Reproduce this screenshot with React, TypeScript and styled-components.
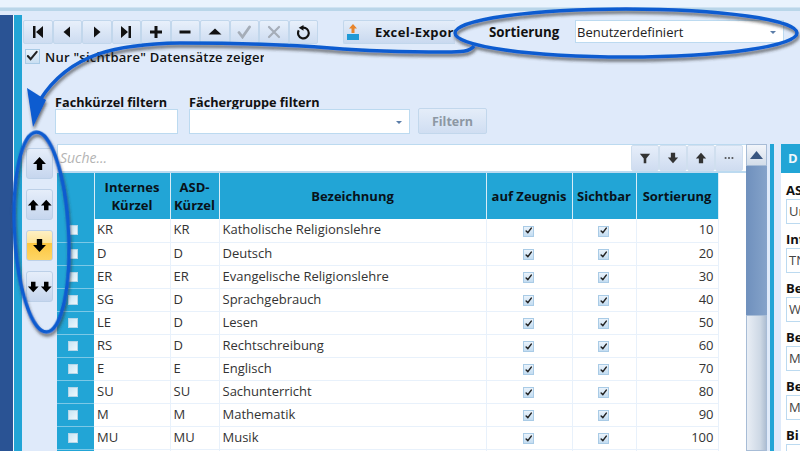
import React from "react";
import styled, { createGlobalStyle } from "styled-components";

const Global = createGlobalStyle`
  html, body { margin: 0; padding: 0; background: #dfeafa; }
  * { box-sizing: border-box; }
`;

const Page = styled.div`
  position: relative; width: 800px; height: 451px; overflow: hidden;
  background: #dfeafa; font-family: "Open Sans", "Noto Sans", sans-serif; color: #111;
  font-size: 13px;
`;
const TopBar = styled.div`
  height: 11px; background: #e9f3fd; border-bottom: 3px solid #b9d6e9;
  box-shadow: inset 0 -1px 0 #cfe3f2;
`;
const Main = styled.div`display: flex; margin-top: 4px; height: 436px;`;
const Sidebar = styled.div`width: 13px; background: #2a5394; border-right: 0;`;
const SideGap = styled.div`width: 1px; background: #f4f8fd;`;
const CyanStrip = styled.div`width: 8px; background: #22a5d6;`;
const Content = styled.div`flex: 1; min-width: 0; display: flex; flex-direction: column; padding-top: 5px;`;

const ToolRow = styled.div`display: flex; align-items: flex-start; padding-left: 1px; height: 24px;`;
const NavBar = styled.div`display: flex; width: 295px;`;
const NavBtn = styled.div`
  width: 29.5px; height: 24px; display: flex; align-items: center; justify-content: center;
  border: 1px solid #c2d7ec; border-radius: 2px;
  background: linear-gradient(#e8f0fb, #cddcf1);
  color: ${p => (p.$off ? "#a5adb8" : "#111")};
`;
const ExcelBtn = styled.div`
  width: 112px; height: 24px; margin-left: 25px; display: flex; align-items: center;
  border: 1px solid #c2d7ec; border-right: 0; border-radius: 2px 0 0 2px; padding-left: 2px;
  background: linear-gradient(#e4edf9, #c9d9ef); overflow: hidden; white-space: nowrap;
  font-weight: 700; font-size: 13px; letter-spacing: 0.4px;
`;
const ExcelIcon = styled.svg`flex: none;`;
const ExcelText = styled.span`flex: none; margin-left: 15px;`;
const SortLabel = styled.div`margin-left: 34px; font-weight: 700; font-size: 13.3px; line-height: 25px; width: 86px;`;
const Combo = styled.div`
  width: ${p => p.$w}px; height: ${p => p.$h}px; background: #fff; border: 1px solid #bcdaf0;
  display: flex; align-items: center; justify-content: space-between; padding: 0 7px 0 1px;
  font-size: 13px; color: #222;
`;
const Caret = styled.span`
  width: 0; height: 0; border-left: 3px solid transparent; border-right: 3px solid transparent;
  border-top: 3px solid #5b7da8; margin-top: 1px;
`;
const CheckRow = styled.div`display: flex; align-items: center; height: 16px; margin: 4px 0 0 3px;`;
const BigCheck = styled.div`
  width: 15px; height: 15px; border: 1px solid #a9cbe6; background: linear-gradient(#eaf3fb,#c9dff2);
  display: flex; align-items: center; justify-content: center; color: #222;
`;
const CheckText = styled.div`
  margin-left: 5px; width: 219px; overflow: hidden; white-space: nowrap; padding-top: 1px;
  font-weight: 600; font-size: 13px; letter-spacing: 0.25px;
`;
const FilterRow = styled.div`display: flex; align-items: flex-end; height: 70px; padding: 0 0 0 33px;`;
const Field = styled.div`display: flex; flex-direction: column; margin-right: ${p => p.$mr}px;`;
const FieldLabel = styled.label`font-weight: 700; font-size: 12.7px; line-height: 15px; margin-bottom: -1px; white-space: nowrap;`;
const TextBox = styled.div`width: 123px; height: 25px; background: #fff; border: 1px solid #bcdaf0;`;
const FilterBtn = styled.div`
  width: 69px; height: 26px; display: flex; align-items: center; justify-content: center;
  border: 1px solid #c2d7ec; border-radius: 2px; background: linear-gradient(#e4edf9,#d0def2);
  font-weight: 700; font-size: 12.5px; color: #8c97a3;
`;
const Body = styled.div`display: flex; margin-top: 10px; flex: 1; min-height: 0;`;
const ArrowCol = styled.div`width: 35px; padding: 4px 0 0 4px; display: flex; flex-direction: column; gap: 10px;`;
const ArrowBtn = styled.div`
  width: 27px; height: 31px; display: flex; align-items: center; justify-content: center;
  border: 1px solid #bcd0e8; border-radius: 3px; color: #000;
  background: ${p => p.$on ? "linear-gradient(#fdf0c4 0%, #fde49a 40%, #fdc63f 42%, #fed565 100%)" : "linear-gradient(#e6eefa,#c6d6ee)"};
`;
const GridPanel = styled.div`width: 689px; display: flex; flex-direction: column; background: #fff; overflow: hidden;`;
const SearchRow = styled.div`
  height: 29px; flex: none; display: flex; justify-content: space-between; background: #fff;
  border: 1px solid #bcdaf0; border-bottom: 2px solid #bcdaf0; border-right: 0; padding-right: 3px;
`;
const SearchText = styled.div`font-style: italic; color: #b3b3b3; font-size: 14px; padding: 3px 0 0 2px;`;
const SearchBtns = styled.div`display: flex;`;
const SearchBtn = styled.div`
  width: 28px; height: 26px; display: flex; align-items: center; justify-content: center;
  border: 1px solid #d0dfef; border-radius: 2px; background: linear-gradient(#e6eefa,#cfdcf0); color: #333;
`;
const Table = styled.table`
  width: 661px; border-collapse: collapse; table-layout: fixed; font-size: 13px; color: #333;
`;
const HeadCell = styled.th`
  height: 46px; padding: 0; background: #22a5d6; color: #08121a; font-size: 13px; font-weight: 700;
  line-height: 18px; text-align: center; border-right: 1px solid #d8ecf7;
`;
const SelCell = styled.td`
  height: 23px; padding: 0; background: #22a5d6; border-bottom: 1px solid #7cc8e6; text-align: center; line-height: 0;
`;
const Cell = styled.td`
  height: 23px; padding: 0 4px 2px 3px; background: #fff; white-space: nowrap; overflow: hidden; line-height: 18px;
  border-right: 1px solid #e8f1fb; border-bottom: 1px solid #e8f1fb;
  text-align: ${p => p.$a || "left"};
`;
const RowBox = styled.span`
  display: inline-block; width: 10px; height: 10px; margin-right: 6px;
  background: linear-gradient(135deg, #c8e6f5, #eef7fc); border: 1px solid #b5d6e8;
`;
const TinyCheck = styled.span`
  display: inline-flex; width: 11px; height: 11px; align-items: center; justify-content: center;
  background: linear-gradient(#eaf3fb,#c3dcf1); border: 1px solid #a9cbe6; vertical-align: -1px; color: #222;
`;
const ScrollBar = styled.div`width: 21px; display: flex; flex-direction: column; background: #7d9cc6;`;
const ScrollUp = styled.div`
  height: 22px; border: 1px solid #a7bcd6; background: linear-gradient(#f2f5fa,#d3dde9);
  display: flex; align-items: center; justify-content: center;
`;
const ScrollTrack = styled.div`height: 149px; background: linear-gradient(90deg,#6f90bd,#85a3ca);`;
const ScrollThumb = styled.div`flex: 1; border: 1px solid #a7bcd6; background: linear-gradient(90deg,#e9eef5,#cdd8e5 70%,#aebed2);`;
const RightStripWrap = styled.div`width: 14px; padding: 0 7px 0 3px; display: flex;`;
const RightStrip = styled.div`width: 4px; background: #22a5d6;`;
const Detail = styled.div`flex: 1; min-width: 0; background: #fff; overflow: hidden; display: flex; flex-direction: column;`;
const DetailHead = styled.div`
  height: 29px; flex: none; background: #22a5d6; color: #eef8fd; font-weight: 700; font-size: 13px; padding: 5px 0 0 7px;
`;
const DetailBody = styled.div`padding: 9px 0 0 5px; background: #fff;`;
const DetailLabel = styled.div`font-weight: 700; font-size: 13px; line-height: 17px; white-space: nowrap;`;
const DetailInput = styled.div`
  height: 25px; width: 40px; margin-bottom: 7px; border: 1px solid #bcdaf0; padding: 2px 0 0 2px;
  font-size: 13px; color: #444; overflow: hidden; background: #fff;
`;
const Overlay = styled.svg`position: absolute; left: 0; top: 0; pointer-events: none;`;

const Ico = ({ d, w = 14, h = 14, sw = 0 }: { d: string; w?: number; h?: number; sw?: number }) => (
  <svg width={w} height={h} viewBox="0 0 14 14">
    <path d={d} fill={sw ? "none" : "currentColor"} stroke={sw ? "currentColor" : "none"} strokeWidth={sw} strokeLinecap="round" />
  </svg>
);

const UP = "M7 1 L13 7.5 H9.5 V13 H4.5 V7.5 H1 Z";
const DOWN = "M7 13 L13 6.5 H9.5 V1 H4.5 V6.5 H1 Z";
const CHECK = "M2 7 L5 10 L11 2";

const navIcons = [
  <Ico key="a" d="M2 1h2.5v12H2z M12 1v12L5 7z" />,
  <Ico key="b" d="M10 1.5v11L3.5 7z" />,
  <Ico key="c" d="M4 1.5v11L10.5 7z" />,
  <Ico key="d" d="M2 1v12L9 7z M9.5 1H12v12H9.5z" />,
  <Ico key="e" d="M5.5 1h3v4.5H13v3H8.5V13h-3V8.5H1v-3h4.5z" />,
  <Ico key="f" d="M1.5 5.5h11v3h-11z" />,
  <Ico key="g" d="M7 3.5 L13.5 9.5 H.5 Z" />,
  <Ico key="h" d="M2 7.5 L5.5 12 L12.5 2" sw={2.8} />,
  <Ico key="i" d="M2 2 L12 12 M12 2 L2 12" sw={2.2} />,
  <svg key="j" width="15" height="15" viewBox="0 0 14 14">
    <path d="M6 2.6 A5 5 0 1 1 2.6 5" fill="none" stroke="currentColor" strokeWidth="2" />
    <path d="M7 0 L2.5 2.6 L7 5.4 Z" fill="currentColor" />
  </svg>,
];

const rows = [
  ["KR", "KR", "Katholische Religionslehre", 10],
  ["D", "D", "Deutsch", 20],
  ["ER", "ER", "Evangelische Religionslehre", 30],
  ["SG", "D", "Sprachgebrauch", 40],
  ["LE", "D", "Lesen", 50],
  ["RS", "D", "Rechtschreibung", 60],
  ["E", "E", "Englisch", 70],
  ["SU", "SU", "Sachunterricht", 80],
  ["M", "M", "Mathematik", 90],
  ["MU", "MU", "Musik", 100],
];
const detail = [["AS", "Ur"], ["Int", "TN"], ["Be", "W"], ["Be", "M"], ["Be", "M"], ["Bi", ""]];

export default function App() {
  return (
    <Page>
      <Global />
      <TopBar />
      <Main>
        <Sidebar />
        <SideGap />
        <CyanStrip />
        <Content>
          <ToolRow>
            <NavBar>{navIcons.map((ic, i) => <NavBtn key={i} $off={i === 7 || i === 8}>{ic}</NavBtn>)}</NavBar>
            <ExcelBtn>
              <ExcelIcon width="14" height="16" viewBox="0 0 14 16">
                <path d="M7 0 L11 4.5 H8.5 V9 H5.5 V4.5 H3 Z" fill="#e8852c" />
                <rect x="1" y="10" width="12" height="6" fill="#1f9ad6" />
              </ExcelIcon>
              <ExcelText>Excel-Export</ExcelText>
            </ExcelBtn>
            <SortLabel>Sortierung</SortLabel>
            <Combo $w={209} $h={23}>Benutzerdefiniert<Caret /></Combo>
          </ToolRow>
          <CheckRow>
            <BigCheck><Ico d="M2 7 L5 10.5 L11.5 2.5" sw={2.2} /></BigCheck>
            <CheckText>Nur "sichtbare" Datensätze zeigen</CheckText>
          </CheckRow>
          <FilterRow>
            <Field $mr={11}>
              <FieldLabel>Fachkürzel filtern</FieldLabel>
              <TextBox />
            </Field>
            <Field $mr={8}>
              <FieldLabel>Fächergruppe filtern</FieldLabel>
              <Combo $w={221} $h={25}><span /><Caret /></Combo>
            </Field>
            <FilterBtn>Filtern</FilterBtn>
          </FilterRow>
          <Body>
            <ArrowCol>
              <ArrowBtn><Ico d={UP} w={15} h={15} /></ArrowBtn>
              <ArrowBtn><Ico d={UP} w={14} h={14} /><Ico d={UP} w={14} h={14} /></ArrowBtn>
              <ArrowBtn $on><Ico d={DOWN} w={15} h={15} /></ArrowBtn>
              <ArrowBtn><Ico d={DOWN} w={14} h={14} /><Ico d={DOWN} w={14} h={14} /></ArrowBtn>
            </ArrowCol>
            <GridPanel>
              <SearchRow>
                <SearchText>Suche...</SearchText>
                <SearchBtns>
                  <SearchBtn><Ico d="M1 2h12L8.5 7.5V13h-3V7.5z" w={12} h={12} /></SearchBtn>
                  <SearchBtn><Ico d={DOWN} w={12} h={12} /></SearchBtn>
                  <SearchBtn><Ico d={UP} w={12} h={12} /></SearchBtn>
                  <SearchBtn><Ico d="M2 6h2v2H2z M6 6h2v2H6z M10 6h2v2h-2z" w={12} h={12} /></SearchBtn>
                </SearchBtns>
              </SearchRow>
              <Table>
                <colgroup>
                  <col width="37" /><col width="76" /><col width="49" /><col width="267" />
                  <col width="86" /><col width="64" /><col width="82" />
                </colgroup>
                <thead>
                  <tr>
                    <HeadCell />
                    <HeadCell>Internes<br />Kürzel</HeadCell>
                    <HeadCell>ASD-<br />Kürzel</HeadCell>
                    <HeadCell>Bezeichnung</HeadCell>
                    <HeadCell>auf Zeugnis</HeadCell>
                    <HeadCell>Sichtbar</HeadCell>
                    <HeadCell>Sortierung</HeadCell>
                  </tr>
                </thead>
                <tbody>
                  {rows.map(r => (
                    <tr key={String(r[3])}>
                      <SelCell><RowBox /></SelCell>
                      <Cell>{r[0]}</Cell>
                      <Cell>{r[1]}</Cell>
                      <Cell>{r[2]}</Cell>
                      <Cell $a="center"><TinyCheck><Ico d={CHECK} w={8} h={8} sw={2.6} /></TinyCheck></Cell>
                      <Cell $a="center"><TinyCheck><Ico d={CHECK} w={8} h={8} sw={2.6} /></TinyCheck></Cell>
                      <Cell $a="right">{r[3]}</Cell>
                    </tr>
                  ))}
                  <tr><SelCell /><Cell /><Cell /><Cell /><Cell /><Cell /><Cell /></tr>
                </tbody>
              </Table>
            </GridPanel>
            <ScrollBar>
              <ScrollUp>
                <svg width="13" height="8" viewBox="0 0 13 8"><path d="M6.5 0 L13 8 H0 Z" fill="#3a5680" /></svg>
              </ScrollUp>
              <ScrollTrack />
              <ScrollThumb />
            </ScrollBar>
            <RightStripWrap><RightStrip /></RightStripWrap>
            <Detail>
              <DetailHead>D</DetailHead>
              <DetailBody>
                {detail.map((d, i) => (
                  <div key={i}>
                    <DetailLabel>{d[0]}</DetailLabel>
                    <DetailInput>{d[1]}</DetailInput>
                  </div>
                ))}
              </DetailBody>
            </Detail>
          </Body>
        </Content>
      </Main>
      <Overlay width="800" height="451" viewBox="0 0 800 451">
        <defs>
          <filter id="sh" x="-10%" y="-20%" width="120%" height="150%">
            <feDropShadow dx="1" dy="3" stdDeviation="1.6" floodColor="#333" floodOpacity="0.65" />
          </filter>
        </defs>
        <g filter="url(#sh)" fill="none" stroke="#0b5bd0" strokeWidth="3.4">
          <ellipse cx="626" cy="33" rx="171" ry="24" />
          <ellipse cx="41.5" cy="232" rx="27" ry="100" transform="rotate(-3 41.5 232)" />
          <path d="M474 46 C470 52 460 52 445 52 C410 52 380 52 330 48 C280 44 230 43 180 43 C120 44 70 52 40 100" />
          <path d="M27 88 L46 100 L33 127 Z" fill="#0b5bd0" stroke="none" />
        </g>
      </Overlay>
    </Page>
  );
}
